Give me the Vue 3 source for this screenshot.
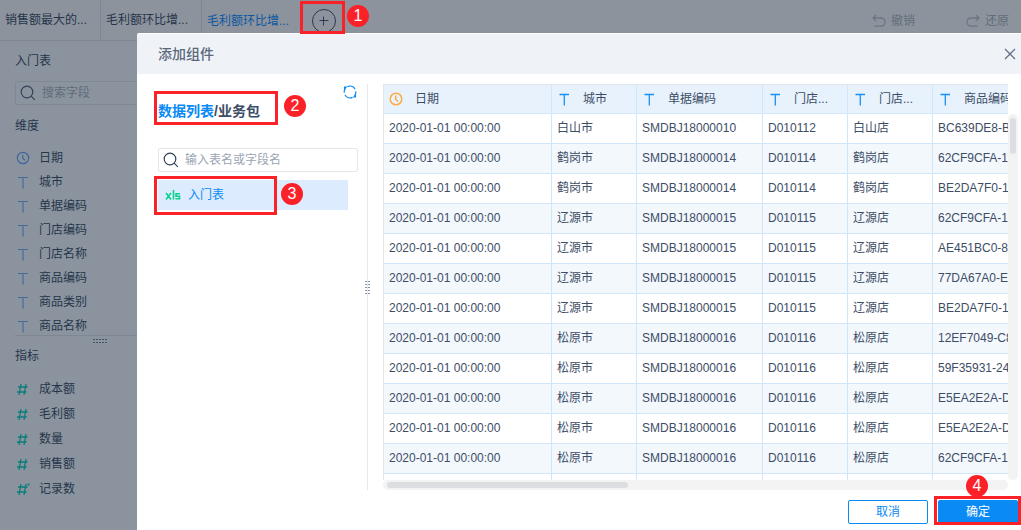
<script setup>
import { ref } from 'vue'

const tabs = ['销售额最大的...', '毛利额环比增...', '毛利额环比增...']
const dimensions = ['日期', '城市', '单据编码', '门店编码', '门店名称', '商品编码', '商品类别', '商品名称']
const measures = ['成本额', '毛利额', '数量', '销售额', '记录数']
const columns = ['日期', '城市', '单据编码', '门店...', '门店...', '商品编码']
const source = [
  ['白山', '10', '12', 'BC639DE8-B'],
  ['鹤岗', '14', '14', '62CF9CFA-1'],
  ['鹤岗', '14', '14', 'BE2DA7F0-1'],
  ['辽源', '15', '15', '62CF9CFA-1'],
  ['辽源', '15', '15', 'AE451BC0-8'],
  ['辽源', '15', '15', '77DA67A0-E'],
  ['辽源', '15', '15', 'BE2DA7F0-1'],
  ['松原', '16', '16', '12EF7049-C8'],
  ['松原', '16', '16', '59F35931-24'],
  ['松原', '16', '16', 'E5EA2E2A-D'],
  ['松原', '16', '16', 'E5EA2E2A-D'],
  ['松原', '16', '16', '62CF9CFA-1'],
  ['', '', '', '']
]
const rows = source.map(([city, bill, shop, code]) =>
  city
    ? ['2020-01-01 00:00:00', city + '市', 'SMDBJ180000' + bill, 'D0101' + shop, city + '店', code]
    : ['', '', '', '', '', '']
)
const fieldQuery = ref('')
const tableQuery = ref('')
</script>

<template>
  <div class="page">
    <header class="topbar">
      <nav class="tabs">
        <button v-for="(t, i) in tabs" :key="i" class="tab" :class="{ active: i === 2 }">{{ t }}</button>
        <button class="add" aria-label="添加组件">
          <svg width="26" height="26" viewBox="0 0 26 26" fill="none" stroke="#2b3a4f">
            <circle cx="13" cy="13" r="11.5" />
            <path d="M8.5 12.5h9M12.5 8.5v9" />
          </svg>
          <span class="mark mark-add"></span>
          <span class="badge badge-add">1</span>
        </button>
      </nav>
      <div class="history">
        <button class="tool">
          <svg width="14" height="14" viewBox="0 0 14 14" fill="none" stroke="#6c7682" stroke-width="1.3">
            <path d="M4 1 1 4 4 7M1 4h8a4 4 0 0 1 0 8.200H2.500" />
          </svg>
          撤销
        </button>
        <button class="tool">
          <svg width="14" height="14" viewBox="0 0 14 14" fill="none" stroke="#6c7682" stroke-width="1.3">
            <path d="M10 1 13 4 10 7M13 4H5a4 4 0 0 0 0 8.200H11.500" />
          </svg>
          还原
        </button>
      </div>
    </header>

    <aside class="sidebar">
      <h2 class="side-title">入门表</h2>
      <label class="search side-search">
        <svg width="16" height="16" viewBox="0 0 16 16" fill="none" stroke="#33435a" stroke-width="1.2">
          <circle cx="7" cy="7" r="5.8" /><path d="m11.2 11.2 3.6 3.6" />
        </svg>
        <input v-model="fieldQuery" type="text" placeholder="搜索字段" aria-label="搜索字段" />
      </label>
      <h3 class="side-title">维度</h3>
      <ul class="fields dims">
        <li v-for="(d, i) in dimensions" :key="d">
          <svg v-if="i === 0" width="14" height="14" viewBox="0 0 14 14" fill="none" stroke="#3d669c" stroke-width="1.2">
            <circle cx="7" cy="7" r="5.7" /><path d="M6.8 3.8v3.500L9 9.200" />
          </svg>
          <svg v-else width="14" height="14" viewBox="0 0 14 14" fill="none" stroke="#466c9c" stroke-width="1.2">
            <path d="M2 2.500h10M7 2.500v11" />
          </svg>
          {{ d }}
        </li>
      </ul>
      <div class="splitter">
        <svg width="14" height="5" viewBox="0 0 14 5" stroke="#43526a" stroke-dasharray="2 1"><path d="M0 .5h14M0 3.500h14" /></svg>
      </div>
      <h3 class="side-title">指标</h3>
      <ul class="fields measures">
        <li v-for="(m, i) in measures" :key="m">
          <svg width="14" height="14" viewBox="0 0 14 14" fill="none" stroke="#0b7c7b" stroke-width="1.3">
            <path d="M5 2 3 13M10 2 8 13M2 5h9.500M1 10h9.500" />
            <path v-if="i === 4" d="M11.500 2.500h2M12.500 1.500v2" />
          </svg>
          {{ m }}
        </li>
      </ul>
    </aside>

    <section class="dialog" role="dialog" aria-labelledby="dialog-title">
      <header class="dialog-head">
        <h1 id="dialog-title">添加组件</h1>
        <button class="close" aria-label="关闭">
          <svg width="12" height="12" viewBox="0 0 12 12" fill="none" stroke="#5d6c80" stroke-width="1.2"><path d="m1 1 10 10M11 1 1 11" /></svg>
        </button>
      </header>
      <div class="dialog-body">
        <div class="picker">
          <button class="refresh" aria-label="刷新">
            <svg width="14" height="14" viewBox="0 0 14 14" fill="none" stroke="#0a8af5" stroke-width="1.3">
              <path d="M1.200 7.500A5.800 5.800 0 0 1 2.500 3.200M4.500 1.700A5.800 5.800 0 0 1 12 4M12.800 6.500a5.800 5.800 0 0 1-1.300 4.300M9.500 12.300A5.800 5.800 0 0 1 2 10" />
              <path d="M1 5V1.500h3.500zM13 9v3.500H9.500z" fill="#0a8af5" stroke="none" />
            </svg>
          </button>
          <div class="crumb">
            <a href="#">数据列表</a><span>/业务包</span>
            <span class="mark mark-crumb"></span>
            <span class="badge badge-crumb">2</span>
          </div>
          <label class="search table-search">
            <svg width="16" height="16" viewBox="0 0 16 16" fill="none" stroke="#33435a" stroke-width="1.2">
              <circle cx="7" cy="7" r="5.8" /><path d="m11.2 11.2 3.6 3.6" />
            </svg>
            <input v-model="tableQuery" type="text" placeholder="输入表名或字段名" aria-label="输入表名或字段名" />
          </label>
          <button class="item">
            <svg width="16" height="12" viewBox="0 0 16 12" fill="none" stroke="#0bd18d" stroke-width="1.6">
              <path d="m1 4 5 6.500M6 4l-5 6.500M8.500 1v9.500M15 4.800h-4v2.400h3.500v2.600h-4" />
            </svg>
            入门表
            <span class="mark mark-item"></span>
            <span class="badge badge-item">3</span>
          </button>
        </div>
        <div class="divider">
          <svg width="5" height="13" viewBox="0 0 5 13" stroke="#8592a3" stroke-dasharray="2 1"><path d="M0 .5h5M0 3.500h5M0 6.500h5M0 9.500h5M0 12.500h5" /></svg>
        </div>
        <div class="preview">
          <div class="viewport">
            <table>
              <colgroup><col class="w-date" /><col class="w-short" /><col class="w-bill" /><col class="w-short" /><col class="w-short" /><col class="w-code" /></colgroup>
              <thead>
                <tr>
                  <th v-for="(c, i) in columns" :key="i" scope="col">
                    <div class="th">
                      <svg v-if="i === 0" width="14" height="14" viewBox="0 0 14 14" fill="none" stroke="#ffab43" stroke-width="1.5">
                        <circle cx="7" cy="7" r="5.8" /><path d="M6.700 3.500v3.800L9 9.500" />
                      </svg>
                      <svg v-else width="14" height="14" viewBox="0 0 14 14" fill="none" stroke="#1a8ff3" stroke-width="1.3">
                        <path d="M2.500 2.500h9.500M7.300 2.500v11" />
                      </svg>
                      <span>{{ c }}</span>
                    </div>
                  </th>
                </tr>
              </thead>
              <tbody>
                <tr v-for="(r, i) in rows" :key="i"><td v-for="(c, j) in r" :key="j">{{ c }}</td></tr>
              </tbody>
            </table>
          </div>
          <div class="vbar"><span></span></div>
          <div class="hbar"><span></span></div>
        </div>
      </div>
      <footer class="dialog-foot">
        <button class="btn">取消</button>
        <button class="btn primary">
          确定
          <span class="mark mark-ok"></span>
          <span class="badge badge-ok">4</span>
        </button>
      </footer>
    </section>
  </div>
</template>

<style>
body { background: #8b949e; }
</style>

<style scoped>
* { box-sizing: border-box; }
.page {
  position: relative;
  height: 100vh;
  overflow: hidden;
  background: #8b949e;
  color: #3d4d66;
  font: 12px/16px "Liberation Sans", "Noto Sans CJK SC", sans-serif;
}
button { font: inherit; color: inherit; background: none; border: 0; padding: 0; margin: 0; }
h1, h2, h3, ul { margin: 0; padding: 0; font: inherit; list-style: none; }
svg { flex: none; display: block; }
.topbar { display: flex; justify-content: space-between; height: 41px; background: #8d939d; }
.tabs { display: flex; }
.tab { width: 101px; padding: 0 5px; border-right: 1px solid #7d8692; border-bottom: 1px solid #7d8692; text-align: left; white-space: nowrap; color: #26354b; }
.tab.active { color: #0b57a0; border-bottom: 0; }
.add { position: relative; width: 42px; display: flex; align-items: center; justify-content: center; border-right: 1px solid #7d8692; }
.history { display: flex; gap: 51px; padding-right: 12px; }
.tool { display: flex; align-items: center; gap: 5px; color: #626d7a; }
.sidebar { width: 210px; padding: 12px 0 0 15px; color: #26354b; }
.side-title { height: 16px; }
.search { display: flex; align-items: center; gap: 6px; height: 24px; padding: 0 4px; border: 1px solid #e3e6ea; border-radius: 2px; }
.search input { flex: 1; min-width: 0; border: 0; padding: 0; background: none; outline: 0; font: inherit; color: inherit; }
.search input::placeholder { color: #9aa5b3; opacity: 1; }
.side-search { margin: 12px 0 13px; border-color: #7f8893; }
.side-search input::placeholder { color: #5f6b7a; }
.fields li { display: flex; align-items: center; gap: 9px; padding-left: 1px; }
.dims { margin-top: 12px; }
.dims li { height: 24px; }
.splitter { display: flex; justify-content: center; margin-top: -3px; padding: 3px 26px 4px 0; border-top: 1px solid #7d8692; }
.measures { margin-top: 12px; }
.measures li { height: 25px; }

.dialog { position: absolute; top: 33px; left: 137px; right: 0; bottom: 0; display: flex; flex-direction: column; background: #fff; border-radius: 2px 0 0 0; }
.dialog-head { display: flex; align-items: center; justify-content: space-between; height: 40px; margin-top: 1px; padding: 0 5px 0 21px; background: #eff3f7; }
.dialog-head h1 { font-size: 14px; font-weight: 500; color: #5a687c; }
.dialog-body { flex: 1; min-height: 0; display: flex; padding: 10px 3px 0 0; }
.picker { width: 230px; flex: none; padding: 1px 9px 0 21px; display: flex; flex-direction: column; }
.refresh { align-self: flex-end; width: 14px; height: 14px; margin-right: 1px; }
.crumb { position: relative; align-self: flex-start; height: 20px; margin-top: 2px; font-size: 14px; line-height: 20px; font-weight: bold; }
.crumb a { color: #0a8af5; text-decoration: none; }
.table-search { margin-top: 27px; }
.item { position: relative; display: flex; align-items: center; gap: 7px; height: 30px; margin: 8px 10px 0 0; padding-left: 7px; background: #dcebfd; color: #0a8af5; }
.divider { width: 1px; flex: none; display: flex; align-items: center; justify-content: center; background: #e6e9ec; }
.preview { flex: 1; min-width: 0; margin-left: 15px; display: grid; grid-template-columns: minmax(0, 1fr) 10px; grid-template-rows: minmax(0, 1fr) 10px; }
.viewport { overflow: hidden; }
table { width: 677px; table-layout: fixed; border-collapse: separate; border-spacing: 0; border-left: 1px solid #dfe7ef; border-top: 1px solid #dfe5eb; }
.w-date { width: 168px; }
.w-short { width: 85px; }
.w-bill { width: 126px; }
.w-code { width: 127px; }
th, td { height: 30px; padding: 0 5px; border-right: 1px solid #d0e6fb; border-bottom: 1px solid #d0e6fb; text-align: left; font-weight: normal; white-space: nowrap; overflow: hidden; }
td { padding-bottom: 2px; }
th { height: 29px; background: #e7f2fd; }
.th { display: flex; align-items: center; gap: 12px; }
tbody tr:nth-child(even) { background: #f3f8fd; }
.vbar { margin-top: 30px; padding: 4px 2px; background: #f3f3f4; border-radius: 5px; }
.vbar span { display: block; height: 36px; border-radius: 3px; background: #dddee2; }
.hbar { padding: 2px 4px; background: #f3f3f4; border-radius: 5px; }
.hbar span { display: block; width: 39%; height: 6px; border-radius: 3px; background: #dddee2; }
.dialog-foot { display: flex; justify-content: flex-end; gap: 10px; padding: 10px 3px 6px; }
.btn { position: relative; width: 80px; height: 24px; border: 1px solid #0a8af5; border-radius: 2px; color: #0a8af5; }
.primary { background: #0a8af5; color: #fff; }

/* numbered step markers laid over the controls */
.mark { position: absolute; border: 3px solid #fb2129; pointer-events: none; }
.badge { position: absolute; width: 22px; height: 22px; border-radius: 50%; background: #fb2129; color: #fff; font-size: 16px; line-height: 22px; font-weight: normal; text-align: center; z-index: 3; }
.mark-add { left: -3px; top: 1px; width: 45px; height: 33px; z-index: 2; }
.badge-add { left: 44px; top: 5px; }
.mark-crumb { left: -4px; top: -10px; width: 124px; height: 34px; }
.badge-crumb { left: 126px; top: -6px; }
.mark-item { left: -4px; top: -4px; width: 123px; height: 39px; }
.badge-item { left: 123px; top: 3px; }
.mark-ok { left: -5px; top: -5px; width: 87px; height: 29px; }
.badge-ok { left: 27px; top: -26px; }
</style>
